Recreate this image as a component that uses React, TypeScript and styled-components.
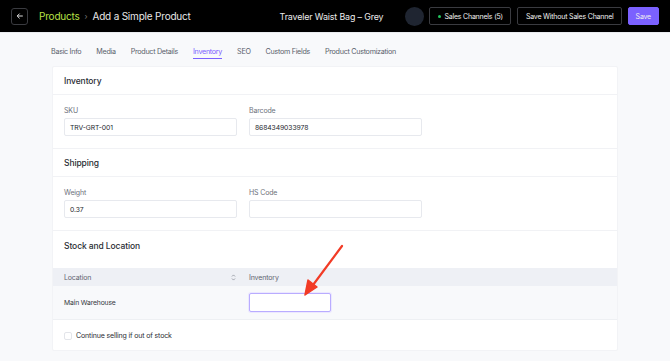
import React from 'react';
import styled, { createGlobalStyle } from 'styled-components';

const GlobalStyle = createGlobalStyle`
  body {
    margin: 0;
    background: #f8f9fb;
    font-family: 'Inter', 'Liberation Sans', sans-serif;
  }
`;

const Page = styled.div`
  position: relative;
  width: 670px;
  height: 361px;
  overflow: hidden;
  background: #f8f9fb;
`;

const TopBar = styled.header`
  height: 32px;
  background: #000;
  border-bottom: 1px solid #e9ebef;
  display: flex;
  align-items: center;
  padding: 0 11px;
`;

const BackButton = styled.button`
  width: 17px;
  height: 17px;
  border: 1px solid #3a3b40;
  border-radius: 3px;
  background: #000;
  padding: 0;
  display: flex;
  align-items: center;
  justify-content: center;
  box-sizing: border-box;
`;

const Crumbs = styled.div`
  display: flex;
  align-items: center;
  margin-left: 11px;
  font-size: 10px;
  letter-spacing: -0.2px;
  gap: 5px;

  .root {
    color: #b9e046;
  }
  .sep {
    color: #777;
    font-size: 8px;
  }
  .current {
    color: #e8e8e8;
  }
`;

const ProductTitle = styled.div`
  margin-left: auto;
  color: #ececec;
  font-size: 8.9px;
  letter-spacing: -0.15px;
`;

const Actions = styled.div`
  display: flex;
  align-items: center;
  gap: 6px;
  margin-left: 22px;
`;

const Avatar = styled.div`
  width: 19px;
  height: 19px;
  border-radius: 50%;
  background: #1f2531;
  margin-right: -1px;
`;

const HeaderButton = styled.button<{ $primary?: boolean }>`
  height: 18px;
  padding: 0 7px 0 ${p => (p.$primary ? 7 : 8)}px;
  border-radius: 2px;
  font-family: inherit;
  font-size: 7px;
  letter-spacing: -0.2px;
  display: flex;
  align-items: center;
  gap: 3px;
  color: #f0f0f0;
  background: ${p => (p.$primary ? '#7b61ff' : '#000')};
  border: 1px solid ${p => (p.$primary ? '#7b61ff' : '#3a3b40')};
`;

const Dot = styled.span`
  width: 3px;
  height: 3px;
  border-radius: 50%;
  background: #22c55e;
`;

const Tabs = styled.nav`
  height: 33px;
  display: flex;
  align-items: center;
  gap: 15px;
  padding: 3px 0 0 51px;
  box-sizing: border-box;
`;

const Tab = styled.div<{ $active?: boolean }>`
  position: relative;
  font-size: 7.2px;
  letter-spacing: -0.3px;
  color: ${p => (p.$active ? '#7b61ff' : '#5a5f6b')};

  &::after {
    content: '';
    display: ${p => (p.$active ? 'block' : 'none')};
    position: absolute;
    left: 0;
    right: 0;
    bottom: -3px;
    height: 1px;
    background: #7b61ff;
  }
`;

const Card = styled.main`
  margin: 0 52px;
  background: #fff;
  border: 1px solid #f2f3f6;
  border-radius: 2px;
  height: 285px;
  box-sizing: border-box;
`;

const SectionTitle = styled.h2`
  margin: 0;
  height: 27px;
  display: flex;
  align-items: center;
  padding: 0 11px;
  font-size: 8.5px;
  letter-spacing: -0.1px;
  font-weight: 500;
  color: #2a2d34;
  border-bottom: 1px solid #f1f2f5;
`;

const FieldRow = styled.div`
  display: flex;
  gap: 12px;
  padding: 11px 11px 12px;
  border-bottom: 1px solid #f1f2f5;
`;

const Field = styled.label`
  display: flex;
  flex-direction: column;
  gap: 3px;
  width: 173px;
  font-size: 7px;
  line-height: 9px;
  letter-spacing: -0.15px;
  color: #6d717b;
`;

const Input = styled.div<{ $focus?: boolean }>`
  height: 18px;
  border: 1px solid ${p => (p.$focus ? '#b9acff' : '#e7e9ee')};
  border-radius: 2px;
  box-sizing: border-box;
  display: flex;
  align-items: center;
  padding: 0 5px;
  font-size: 6.8px;
  letter-spacing: -0.1px;
  color: #24272e;
  background: #fff;
  box-shadow: ${p => (p.$focus ? '0 0 0 1px #ece8ff' : 'none')};
`;

const StockTitle = styled(SectionTitle)`
  height: 37px;
  align-items: flex-start;
  padding-top: 10px;
  border-bottom: none;
  box-sizing: border-box;
`;

const Table = styled.div`
  display: grid;
  grid-template-columns: 196px 1fr;
`;

const HeadCell = styled.div<{ $first?: boolean }>`
  height: 18px;
  background: #eef0f5;
  display: flex;
  align-items: center;
  justify-content: space-between;
  padding: 0 ${p => (p.$first ? '13px 0 11px' : '0 0 0')};
  font-size: 7px;
  letter-spacing: -0.15px;
  color: #5f6470;
`;

const BodyCell = styled.div<{ $first?: boolean }>`
  height: 34px;
  background: #f8f9fb;
  display: flex;
  align-items: center;
  padding-left: ${p => (p.$first ? 11 : 0)}px;
  font-size: 6.8px;
  letter-spacing: -0.15px;
  color: #353841;
  border-bottom: 1px solid #eef0f3;
  box-sizing: border-box;

  & > div {
    width: 82px;
    height: 19px;
  }
`;

const CheckRow = styled.div`
  display: flex;
  align-items: center;
  gap: 4px;
  padding: 11px 11px;
  font-size: 7px;
  letter-spacing: -0.15px;
  color: #2a2d34;
`;

const Box = styled.span`
  width: 8px;
  height: 8px;
  border: 1px solid #e3e5ea;
  border-radius: 2px;
  box-sizing: border-box;
`;

const Arrow = styled.svg`
  position: absolute;
  left: 0;
  top: 0;
  pointer-events: none;
`;

export default function App() {
  return (
    <Page>
      <GlobalStyle />
      <TopBar>
        <BackButton aria-label="Back">
          <svg width="8" height="8" viewBox="0 0 10 10" fill="none" stroke="#e6e6e6" strokeWidth="1.2">
            <path d="M8.5 5H1.5M4.5 2L1.5 5l3 3" />
          </svg>
        </BackButton>
        <Crumbs>
          <span className="root">Products</span>
          <span className="sep">›</span>
          <span className="current">Add a Simple Product</span>
        </Crumbs>
        <ProductTitle>Traveler Waist Bag – Grey</ProductTitle>
        <Actions>
          <Avatar />
          <HeaderButton>
            <Dot />
            Sales Channels (5)
          </HeaderButton>
          <HeaderButton>Save Without Sales Channel</HeaderButton>
          <HeaderButton $primary>Save</HeaderButton>
        </Actions>
      </TopBar>

      <Tabs>
        {['Basic Info', 'Media', 'Product Details', 'Inventory', 'SEO', 'Custom Fields', 'Product Customization'].map(t => (
          <Tab key={t} $active={t === 'Inventory'}>
            {t}
          </Tab>
        ))}
      </Tabs>

      <Card>
        <SectionTitle>Inventory</SectionTitle>
        <FieldRow>
          <Field>
            SKU
            <Input>TRV-GRT-001</Input>
          </Field>
          <Field>
            Barcode
            <Input>8684349033978</Input>
          </Field>
        </FieldRow>

        <SectionTitle>Shipping</SectionTitle>
        <FieldRow>
          <Field>
            Weight
            <Input>0.37</Input>
          </Field>
          <Field>
            HS Code
            <Input />
          </Field>
        </FieldRow>

        <StockTitle>Stock and Location</StockTitle>
        <Table>
          <HeadCell $first>
            Location
            <svg width="5" height="7" viewBox="0 0 6 9" fill="none" stroke="#8a8e98" strokeWidth="1">
              <path d="M1 3.2L3 1.2l2 2M1 5.8l2 2 2-2" />
            </svg>
          </HeadCell>
          <HeadCell>Inventory</HeadCell>
          <BodyCell $first>Main Warehouse</BodyCell>
          <BodyCell>
            <Input $focus />
          </BodyCell>
        </Table>
        <CheckRow>
          <Box />
          Continue selling if out of stock
        </CheckRow>
      </Card>

      <Arrow width="670" height="361" viewBox="0 0 670 361">
        <line x1="342" y1="246" x2="313" y2="285" stroke="#f23b26" strokeWidth="2.2" strokeLinecap="round" />
        <polygon points="305,295 308,280 317,287" fill="#f23b26" stroke="#f23b26" strokeWidth="1.5" strokeLinejoin="round" />
      </Arrow>
    </Page>
  );
}
